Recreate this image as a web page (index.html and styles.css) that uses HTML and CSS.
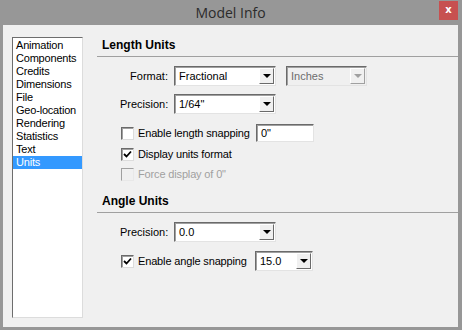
FILE: index.html
```html
<!DOCTYPE html>
<html lang="en">
<head>
    <meta charset="UTF-8">
    <meta name="viewport" content="width=device-width, initial-scale=1.0">
    <title>Model Info</title>
    <link rel="stylesheet" href="styles.css">
</head>
<body>
  <div class="window">
    <div class="titlebar">
      <span></span>
      <span class="title">Model Info</span>
      <div class="close">x</div>
    </div>

    <div class="content">
      <ul class="nav-list">
        <li>Animation</li>
        <li>Components</li>
        <li>Credits</li>
        <li>Dimensions</li>
        <li>File</li>
        <li>Geo-location</li>
        <li>Rendering</li>
        <li>Statistics</li>
        <li>Text</li>
        <li class="selected">Units</li>
      </ul>

      <div class="panel">
        <div class="section-title">Length Units</div>

        <div class="row row-first">
          <span class="field-label">Format:</span>
          <div class="dropdown wide"><span class="value">Fractional</span><span class="arrow"></span></div>
          <div class="dropdown units disabled"><span class="value">Inches</span><span class="arrow"></span></div>
        </div>

        <div class="row row-second">
          <span class="field-label">Precision:</span>
          <div class="dropdown wide"><span class="value">1/64"</span><span class="arrow"></span></div>
        </div>

        <div class="check-row snap-row">
          <span class="checkbox"></span>
          <span class="check-text field-text">Enable length snapping</span>
          <div class="textbox">0"</div>
        </div>

        <div class="check-row display-row">
          <span class="checkbox checked">
            <svg width="9" height="9" viewBox="0 0 9 9"><path d="M1 4 L3.5 6.5 L8 1.5" fill="none" stroke="#000" stroke-width="1.8"/></svg>
          </span>
          <span class="check-text">Display units format</span>
        </div>

        <div class="check-row force-row disabled">
          <span class="checkbox"></span>
          <span class="check-text">Force display of 0"</span>
        </div>

        <div class="section-title angle-title">Angle Units</div>

        <div class="row row-first">
          <span class="field-label">Precision:</span>
          <div class="dropdown wide"><span class="value">0.0</span><span class="arrow"></span></div>
        </div>

        <div class="check-row angle-snap">
          <span class="checkbox checked">
            <svg width="9" height="9" viewBox="0 0 9 9"><path d="M1 4 L3.5 6.5 L8 1.5" fill="none" stroke="#000" stroke-width="1.8"/></svg>
          </span>
          <span class="check-text field-text angle-text">Enable angle snapping</span>
          <div class="dropdown small"><span class="value">15.0</span><span class="arrow"></span></div>
        </div>
      </div>
    </div>
  </div>
</body>
</html>
```

FILE: styles.css
```css
body {
  margin: 0;
  font-family: "Liberation Sans", Arial, sans-serif;
  font-size: 11px;
  color: #000;
  background: #979797;
}
.window {
  width: 462px;
  height: 330px;
  box-sizing: border-box;
  padding: 0 4px 3px 3px;
  background: #979797;
  display: flex;
  flex-direction: column;
}
.titlebar {
  height: 25px;
  display: grid;
  grid-template-columns: 1fr auto 1fr;
  align-items: start;
}
.title {
  font-family: "Open Sans", "Noto Sans", sans-serif;
  font-size: 14px;
  line-height: 26px;
  color: #2b2b2b;
}
.close {
  justify-self: end;
  margin-top: 1px;
  width: 19px;
  height: 19px;
  background: #c75050;
  color: #fff;
  font-family: "DejaVu Sans", sans-serif;
  font-weight: bold;
  font-size: 10px;
  line-height: 17px;
  text-align: center;
}
.content {
  flex: 1;
  background: #f0f0f0;
  display: flex;
  padding: 12px 0 0 9px;
}
.nav-list {
  list-style: none;
  margin: 0;
  padding: 1px 0 0 0;
  width: 71px;
  height: 281px;
  box-sizing: border-box;
  background: #fff;
  border: 1px solid;
  border-color: #6d6d6d #dcdcdc #dcdcdc #6d6d6d;
}
.nav-list li {
  height: 13px;
  line-height: 13px;
  padding-left: 3px;
  letter-spacing: -0.2px;
}
.nav-list li.selected {
  background: #3399ff;
  color: #fff;
}
.panel {
  flex: 1;
  margin-left: 14px;
}
.section-title {
  height: 19px;
  line-height: 17px;
  padding-left: 5px;
  font-weight: bold;
  font-size: 12px;
  border-bottom: 1px solid #a0a0a0;
}
.angle-title {
  margin-top: 10px;
}
.row {
  display: flex;
  align-items: center;
  padding-left: 23px;
}
.row-first {
  margin-top: 9px;
}
.row-second {
  margin-top: 8px;
}
.field-label {
  width: 54px;
  padding-right: 6px;
  box-sizing: border-box;
  text-align: right;
}
.dropdown {
  height: 20px;
  box-sizing: border-box;
  background: #fff;
  border: 1px solid;
  border-color: #6a6a6a #e3e3e3 #e3e3e3 #6a6a6a;
  box-shadow: inset 1px 1px 0 #a0a0a0;
  display: flex;
  align-items: center;
  padding: 1px;
}
.dropdown.wide {
  width: 102px;
}
.dropdown.units {
  width: 81px;
  margin-left: 10px;
}
.dropdown.small {
  width: 58px;
}
.dropdown .value {
  flex: 1;
  padding-left: 3px;
}
.dropdown .arrow {
  width: 15px;
  height: 16px;
  box-sizing: border-box;
  background: #f0f0f0;
  border: 1px solid;
  border-color: #fff #6a6a6a #6a6a6a #fff;
  display: flex;
  align-items: center;
  justify-content: center;
}
.dropdown .arrow::after {
  content: "";
  border-left: 4px solid transparent;
  border-right: 4px solid transparent;
  border-top: 4px solid #000;
}
.dropdown.disabled {
  background: #f0f0f0;
  color: #6d6d6d;
}
.dropdown.disabled .arrow {
  border-color: #fff #a0a0a0 #a0a0a0 #fff;
}
.dropdown.disabled .arrow::after {
  border-top-color: #a0a0a0;
}
.check-row {
  display: flex;
  align-items: center;
  height: 18px;
  padding-left: 24px;
}
.check-text {
  letter-spacing: -0.15px;
}
.field-text {
  width: 118px;
}
.angle-text {
  width: 117px;
}
.snap-row {
  margin-top: 10px;
}
.display-row {
  margin-top: 3px;
}
.force-row {
  margin-top: 2px;
}
.angle-snap {
  margin-top: 9px;
  height: 20px;
}
.checkbox {
  width: 13px;
  height: 13px;
  box-sizing: border-box;
  background: #fff;
  border: 1px solid;
  border-color: #6a6a6a #dcdcdc #dcdcdc #6a6a6a;
  box-shadow: inset 1px 1px 0 #a0a0a0;
  display: flex;
  align-items: center;
  justify-content: center;
  margin-right: 4px;
}
.check-row.disabled {
  color: #a0a0a0;
}
.check-row.disabled .checkbox {
  background: #f0f0f0;
  border-color: #a0a0a0 #e8e8e8 #e8e8e8 #a0a0a0;
  box-shadow: none;
}
.textbox {
  width: 58px;
  height: 18px;
  box-sizing: border-box;
  padding-left: 4px;
  line-height: 16px;
  background: #fff;
  border: 1px solid;
  border-color: #6a6a6a #e3e3e3 #e3e3e3 #6a6a6a;
  box-shadow: inset 1px 1px 0 #a0a0a0;
}
```
